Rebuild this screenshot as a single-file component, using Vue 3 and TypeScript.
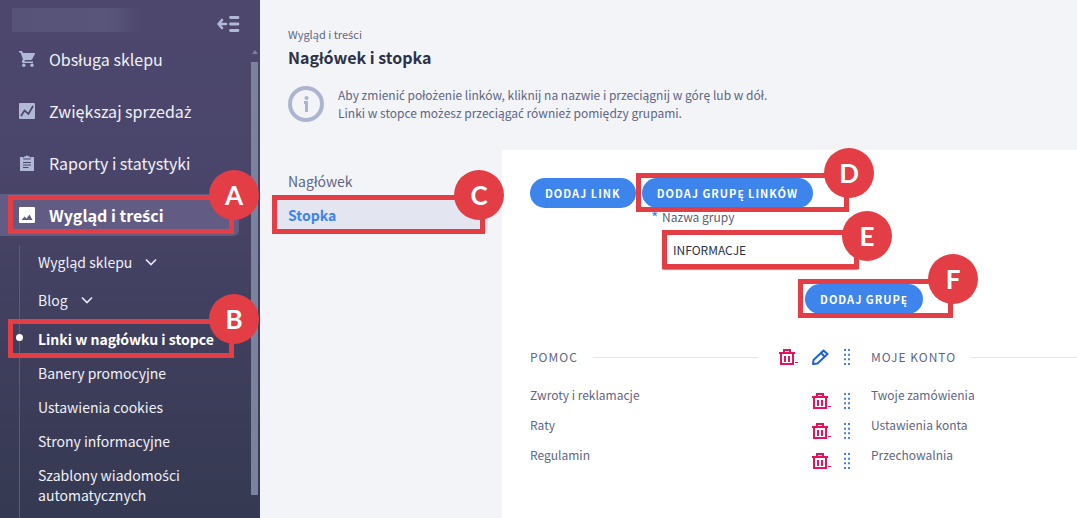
<script setup lang="ts">
import { h, ref } from 'vue'

interface MenuItem {
  label: string
  icon: 'cart' | 'chart' | 'clipboard' | 'image'
  active?: boolean
}

interface SubItem {
  label: string
  expandable?: boolean
  current?: boolean
}

interface LinkGroup {
  title: string
  links: string[]
  editable: boolean
}

const menu: MenuItem[] = [
  { label: 'Obsługa sklepu', icon: 'cart' },
  { label: 'Zwiększaj sprzedaż', icon: 'chart' },
  { label: 'Raporty i statystyki', icon: 'clipboard' },
  { label: 'Wygląd i treści', icon: 'image', active: true },
]

const submenu: SubItem[] = [
  { label: 'Wygląd sklepu', expandable: true },
  { label: 'Blog', expandable: true },
  { label: 'Linki w nagłówku i stopce', current: true },
  { label: 'Banery promocyjne' },
  { label: 'Ustawienia cookies' },
  { label: 'Strony informacyjne' },
  { label: 'Szablony wiadomości automatycznych' },
]

const groups: LinkGroup[] = [
  { title: 'POMOC', links: ['Zwroty i reklamacje', 'Raty', 'Regulamin'], editable: true },
  { title: 'MOJE KONTO', links: ['Twoje zamówienia', 'Ustawienia konta', 'Przechowalnia'], editable: false },
]

const hints: string[] = [
  'Aby zmienić położenie linków, kliknij na nazwie i przeciągnij w górę lub w dół.',
  'Linki w stopce możesz przeciągać również pomiędzy grupami.',
]

const groupName = ref('INFORMACJE')

// The main family has no precomposed ć, ń, ś, ź, ż; these letters take a family that has them.
const PolishText = (props: { text: string }) =>
  h(
    'span',
    props.text.split(/([ćńśźż])/).map((part) => (/^[ćńśźż]$/.test(part) ? h('span', { class: 'accented' }, part) : part)),
  )
PolishText.props = ['text']
</script>

<template>
  <div class="page">
    <aside class="sidebar">
      <header class="brand">
        <div class="shop-name"></div>
        <button class="collapse" type="button" aria-label="Zwiń menu">
          <svg width="24" height="18" viewBox="0 0 24 18" fill="none" stroke="#b0b9d6" stroke-linecap="round" stroke-linejoin="round">
            <path d="M10 9H3M6 5L2.500 9L6 13" stroke-width="2.600" />
            <path d="M14.500 2.500H22M14.500 9H22M14.500 15.500H22" stroke-width="2.800" />
          </svg>
        </button>
      </header>

      <nav class="menu">
        <a v-for="item in menu" :key="item.label" href="#" class="menu-item" :class="{ active: item.active }">
          <svg v-if="item.icon === 'cart'" width="16" height="16" viewBox="0 0 16 16" fill="#b0b9d6">
            <path d="M0 0H3L4 2H15.500Q16.200 2 15.900 3L13.300 8Q13 9 12 9H6L5.300 10.400H14V12H4Q2.300 11.500 3 10L4 8.200L1.500 1.600H0Z" />
            <circle cx="4.800" cy="14.300" r="1.700" />
            <circle cx="13" cy="14.300" r="1.700" />
          </svg>
          <svg v-else-if="item.icon === 'chart'" width="16" height="16" viewBox="0 0 16 16" fill="none">
            <rect width="16" height="16" rx="1" fill="#b0b9d6" />
            <path d="M2 13L5.500 7.500L9.500 11L14 3" stroke="#4a456a" stroke-width="1.700" />
          </svg>
          <svg v-else-if="item.icon === 'clipboard'" width="16" height="16" viewBox="0 0 16 16">
            <path d="M1 2H4.500V4.500H11.500V2H15V16H1Z" fill="#b0b9d6" />
            <path d="M5 1.500H6.500A1.600 1.600 0 0 1 9.500 1.500H11V3.500H5Z" fill="#b0b9d6" />
            <path d="M4 7.500H12M4 10H12M4 12.500H9.500" stroke="#4a456a" stroke-width="1.200" />
          </svg>
          <svg v-else width="16" height="16" viewBox="0 0 16 16">
            <rect width="16" height="16" rx="1" fill="#fff" />
            <path d="M2.500 13L5.500 9.500L7.500 11.500L10.500 7.500L13.500 13Z" fill="#625c84" />
          </svg>
          <PolishText :text="item.label" />
          <span v-if="item.active" class="callout callout-a"><b class="badge">A</b></span>
        </a>
      </nav>

      <ul class="submenu">
        <li v-for="item in submenu" :key="item.label" :class="{ expandable: item.expandable, current: item.current }">
          <a href="#"><PolishText :text="item.label" /></a>
          <svg v-if="item.expandable" width="12" height="8" viewBox="0 0 12 8" fill="none" stroke="#e6e8f2" stroke-width="1.700">
            <path d="M1 1.500L6 6.500L11 1.500" />
          </svg>
          <span v-if="item.current" class="callout callout-b"><b class="badge">B</b></span>
        </li>
      </ul>

      <div class="scrollbar">
        <i class="scroll-up"></i>
        <i class="scroll-thumb"></i>
      </div>
    </aside>

    <main class="main">
      <header class="heading">
        <a href="#" class="crumb"><PolishText text="Wygląd i treści" /></a>
        <h1>Nagłówek i stopka</h1>
        <div class="info">
          <svg width="36" height="36" viewBox="0 0 36 36" fill="none" stroke="#abb5d0">
            <circle cx="18" cy="18" r="16" stroke-width="4" />
            <circle cx="18.500" cy="12" r="2" fill="#abb5d0" stroke="none" />
            <path d="M16 16.500H18.500V26" stroke-width="3" />
          </svg>
          <div>
            <p v-for="hint in hints" :key="hint"><PolishText :text="hint" /></p>
          </div>
        </div>
      </header>

      <div class="body">
        <nav class="tabs">
          <a href="#">Nagłówek</a>
          <a href="#" class="selected">
            Stopka
            <span class="callout callout-c"><b class="badge">C</b></span>
          </a>
        </nav>

        <section class="panel">
          <div class="buttons">
            <button type="button" class="pill">DODAJ LINK</button>
            <div class="anchor">
              <button type="button" class="pill">DODAJ GRUPĘ LINKÓW</button>
              <span class="callout callout-d"><b class="badge">D</b></span>
            </div>
          </div>

          <form class="form" @submit.prevent>
            <label for="group-name"><span class="star">*</span>Nazwa grupy</label>
            <div class="field">
              <input id="group-name" v-model="groupName" type="text" />
              <span class="callout callout-e"><b class="badge">E</b></span>
            </div>
            <div class="anchor submit">
              <button type="submit" class="pill">DODAJ GRUPĘ</button>
              <span class="callout callout-f"><b class="badge">F</b></span>
            </div>
          </form>

          <div class="groups">
            <section v-for="group in groups" :key="group.title" class="group">
              <header class="group-head">
                <h2>{{ group.title }}</h2>
                <span class="rule"></span>
                <div v-if="group.editable" class="actions">
                  <button type="button" aria-label="Usuń grupę">
                    <svg width="19" height="16" viewBox="0 0 19 16" fill="none" stroke="#e5125d">
                      <path d="M0 4H16" stroke-width="2" />
                      <path d="M5 3V1H11V3M2 5V15H14V5" stroke-width="2" />
                      <path d="M6 7V13M10 7V13" stroke-width="2" />
                      <path d="M16 13.500H19" />
                    </svg>
                  </button>
                  <button type="button" aria-label="Edytuj grupę">
                    <svg width="18" height="16" viewBox="0 0 18 16" fill="none" stroke="#1d63d2" stroke-width="2" stroke-linejoin="round">
                      <path d="M1 15L1.500 11L11.500 1.500L15.500 5L5.500 14.500Z" />
                      <path d="M9 4L13 8" />
                    </svg>
                  </button>
                  <button type="button" aria-label="Przesuń grupę">
                    <svg width="6" height="16" viewBox="0 0 6 16" fill="none" stroke="#4a80dc" stroke-width="2">
                      <path d="M1 0V16M5 0V16" stroke-dasharray="2 2.660" />
                    </svg>
                  </button>
                </div>
              </header>
              <ul>
                <li v-for="link in group.links" :key="link">
                  <span>{{ link }}</span>
                  <div v-if="group.editable" class="actions">
                    <button type="button" :aria-label="'Usuń: ' + link">
                      <svg width="19" height="16" viewBox="0 0 19 16" fill="none" stroke="#e5125d">
                        <path d="M0 4H16" stroke-width="2" />
                        <path d="M5 3V1H11V3M2 5V15H14V5" stroke-width="2" />
                        <path d="M6 7V13M10 7V13" stroke-width="2" />
                        <path d="M16 13.500H19" />
                      </svg>
                    </button>
                    <button type="button" :aria-label="'Przesuń: ' + link">
                      <svg width="6" height="16" viewBox="0 0 6 16" fill="none" stroke="#4a80dc" stroke-width="2">
                        <path d="M1 0V16M5 0V16" stroke-dasharray="2 2.660" />
                      </svg>
                    </button>
                  </div>
                </li>
              </ul>
            </section>
          </div>
        </section>
      </div>
    </main>
  </div>
</template>

<style>
body {
  margin: 0;
}
.accented {
  font-family: "Noto Sans", sans-serif;
  line-height: 1;
}
</style>

<style scoped>
.page {
  display: flex;
  min-height: 100vh;
  background: #f3f4f8;
  color: #5f6683;
  font-family: "Noto Sans CJK SC", "Noto Sans", sans-serif;
  font-size: 13px;
  line-height: 20px;
  overflow: hidden;
}
.page * {
  box-sizing: border-box;
}
a {
  color: inherit;
  text-decoration: none;
}
ul {
  list-style: none;
  margin: 0;
  padding: 0;
}
svg {
  display: block;
  flex: none;
}
button {
  border: 0;
  padding: 0;
  background: none;
  font-family: inherit;
  cursor: pointer;
}

/* sidebar */
.sidebar {
  position: relative;
  flex: none;
  display: flex;
  flex-direction: column;
  width: 260px;
  background: linear-gradient(#4d476d 0, #4a456a 160px, #353951 100%);
  color: #f0f1f7;
}
.brand {
  display: flex;
  justify-content: space-between;
  padding: 8px 20px 0 12px;
  height: 38px;
}
.shop-name {
  width: 130px;
  height: 24px;
  background: linear-gradient(90deg, #575277, #59547a 75%, #4d476d);
}
.collapse {
  height: 32px;
}
.menu {
  display: flex;
  flex-direction: column;
  gap: 10px;
}
.menu-item {
  position: relative;
  display: flex;
  align-items: center;
  gap: 14px;
  height: 42px;
  margin-right: 21px;
  padding-left: 19px;
  font-size: 16px;
}
.menu-item.active {
  background: #625c84;
  border-radius: 0 6px 6px 0;
  color: #fff;
  font-weight: 700;
}
.submenu {
  flex: 1;
  margin: 9px 0 0 19px;
  padding: 5px 0 12px;
  border-left: 1px solid #5b5c7a;
  font-size: 14px;
}
.submenu li {
  position: relative;
  display: flex;
  align-items: center;
  gap: 13px;
  width: 194px;
  margin-bottom: 14px;
  padding-left: 18px;
}
.submenu li:last-child {
  margin-bottom: 0;
}
.submenu li.expandable {
  height: 24px;
}
.submenu li.current {
  margin-top: 17px;
  color: #fff;
  font-weight: 700;
  white-space: nowrap;
}
.submenu li.current::before {
  content: "";
  position: absolute;
  left: -4px;
  top: 5px;
  width: 7px;
  height: 7px;
  border-radius: 50%;
  background: #fff;
}
.scrollbar {
  position: absolute;
  top: 50px;
  right: 2px;
  bottom: 23px;
  width: 7px;
  display: flex;
  flex-direction: column;
  align-items: center;
  gap: 8px;
}
.scroll-up {
  border: 3px solid transparent;
  border-top: 0;
  border-bottom: 4px solid #7a829e;
}
.scroll-thumb {
  flex: 1;
  width: 7px;
  background: #7a829e;
}

/* step markers */
.callout {
  position: absolute;
  z-index: 2;
  height: 39px;
  border: 5px solid #e33e46;
  pointer-events: none;
}
.badge {
  position: absolute;
  top: -30px;
  right: -30px;
  width: 50px;
  height: 50px;
  border-radius: 50%;
  background: #e33e46;
  color: #fff;
  font-family: Lato, sans-serif;
  font-size: 26px;
  font-weight: 700;
  line-height: 50px;
  text-align: center;
}
.callout-a {
  left: 8px;
  right: 5px;
  top: 1px;
}
.callout-b {
  left: -12px;
  right: -20px;
  top: -10px;
}
.callout-c {
  left: 0;
  right: 3px;
  top: -4px;
}
.callout-c .badge {
  right: -24px;
}
.callout-d {
  left: -6px;
  right: -36px;
  top: -5px;
}
.callout-e {
  left: 0;
  right: 0;
  top: 0;
}
.callout-e .badge {
  top: -24px;
  right: -38px;
}
.callout-f {
  left: -7px;
  right: -30px;
  top: -5px;
}

/* content */
.main {
  flex: 1;
  min-width: 0;
  display: flex;
  flex-direction: column;
}
.heading {
  padding: 25px 28px 28px;
}
.crumb {
  display: block;
  font-size: 11px;
  line-height: 18px;
}
h1 {
  margin: 4px 0 19px;
  color: #2b3247;
  font-size: 16px;
  font-weight: 600;
  line-height: 20px;
}
.info {
  display: flex;
  gap: 14px;
}
.info p {
  margin: 0;
  font-size: 12px;
  line-height: 18px;
}
.body {
  flex: 1;
  display: flex;
  gap: 14px;
  padding-left: 12px;
}
.tabs {
  flex: none;
  width: 216px;
  padding-top: 15px;
  font-size: 14px;
}
.tabs a {
  position: relative;
  display: block;
  padding: 6px 16px 8px;
}
.tabs .selected {
  background: #e3e6f0;
  border-radius: 0 6px 6px 0;
  color: #3f84ec;
  font-weight: 700;
}
.panel {
  flex: 1;
  min-width: 0;
  padding: 28px 0 28px 28px;
  background: #fff;
}
.buttons {
  display: flex;
  gap: 6px;
}
.anchor {
  position: relative;
}
.pill {
  display: block;
  height: 30px;
  padding: 0 15px;
  border-radius: 15px;
  background: #3d84ec;
  color: #fff;
  font-size: 11px;
  font-weight: 700;
  letter-spacing: 1px;
  white-space: nowrap;
}
.form {
  display: flex;
  flex-direction: column;
  width: 393px;
  padding-left: 121px;
}
.form label {
  display: flex;
  gap: 4px;
  line-height: 18px;
  color: #5a5f73;
  font-size: 12px;
}
.star {
  width: 7px;
  color: #3d84ec;
  font-size: 16px;
}
.field {
  position: relative;
  width: 197px;
  margin: 4px 0 15px 11px;
}
.field input {
  display: block;
  width: 100%;
  height: 39px;
  padding: 0 11px;
  border: 0;
  border-radius: 2px;
  background: #fff;
  box-shadow: 0 1px 1px #8a90ab;
  color: #2b3247;
  font-family: inherit;
  font-size: 12px;
}
.submit {
  align-self: flex-end;
}
.groups {
  display: grid;
  grid-template-columns: 320px 1fr;
  gap: 21px;
  margin-top: 33px;
  font-size: 12px;
}
.group-head {
  display: flex;
  align-items: center;
  height: 20px;
  margin-bottom: 18px;
}
h2 {
  margin: 0 15px 0 0;
  font-size: 12px;
  font-weight: 400;
  letter-spacing: 1px;
}
.rule {
  flex: 1;
  height: 1px;
  background: #e4e5ea;
}
.actions {
  display: flex;
  align-items: flex-start;
  gap: 14px;
  margin-left: 21px;
}
.group li {
  display: flex;
  justify-content: space-between;
  height: 30px;
}
.group li .actions {
  gap: 13px;
  padding-top: 8px;
}
</style>
